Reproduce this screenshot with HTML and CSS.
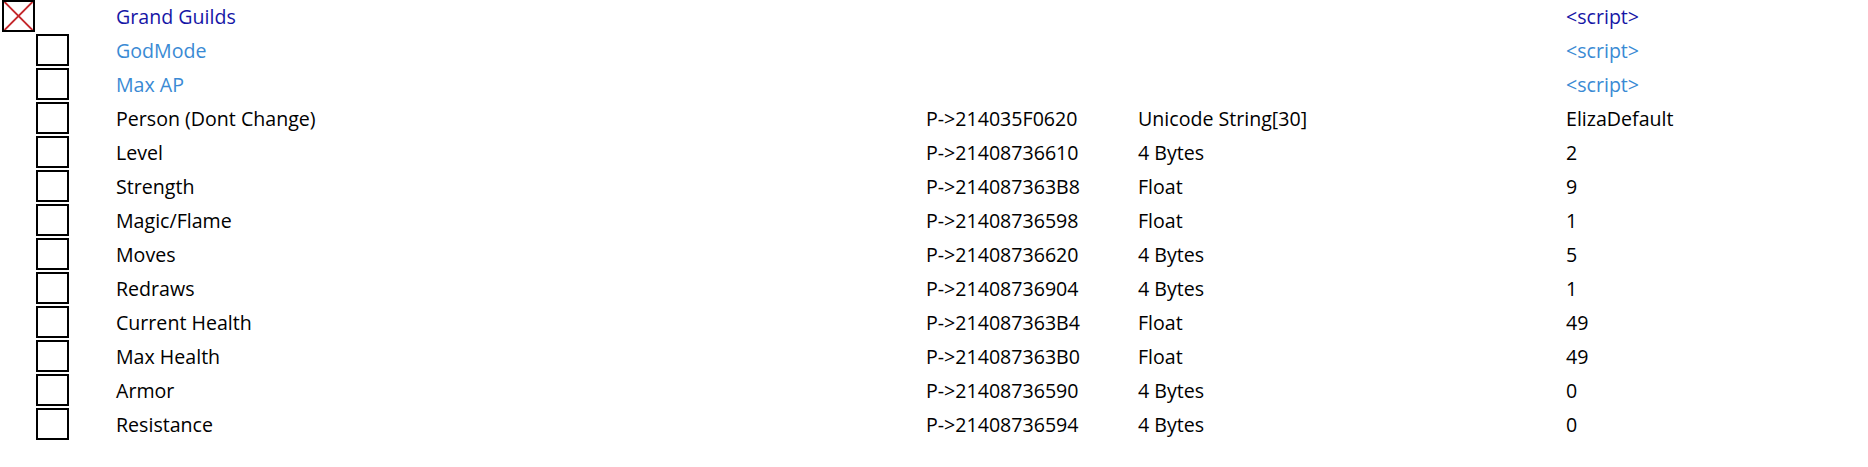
FILE: index.html
```html
<!DOCTYPE html>
<html>
<head>
<meta charset="utf-8">
<link rel="stylesheet" href="styles.css">
</head>
<body>
<div class="table">
  <div class="row">
    <div class="chk-cell"><span class="box"><svg class="x" viewBox="0 0 29 29"><line x1="0" y1="0" x2="29" y2="29"/><line x1="29" y1="0" x2="0" y2="29"/></svg></span></div>
    <div class="name group">Grand Guilds</div><div class="addr"></div><div class="type"></div><div class="val group">&lt;script&gt;</div>
  </div>
  <div class="row child">
    <div class="chk-cell"><span class="box"></span></div>
    <div class="name script">GodMode</div><div class="addr"></div><div class="type"></div><div class="val script">&lt;script&gt;</div>
  </div>
  <div class="row child">
    <div class="chk-cell"><span class="box"></span></div>
    <div class="name script">Max AP</div><div class="addr"></div><div class="type"></div><div class="val script">&lt;script&gt;</div>
  </div>
  <div class="row child">
    <div class="chk-cell"><span class="box"></span></div>
    <div class="name">Person (Dont Change)</div><div class="addr">P-&gt;214035F0620</div><div class="type">Unicode String[30]</div><div class="val">ElizaDefault</div>
  </div>
  <div class="row child">
    <div class="chk-cell"><span class="box"></span></div>
    <div class="name">Level</div><div class="addr">P-&gt;21408736610</div><div class="type">4 Bytes</div><div class="val">2</div>
  </div>
  <div class="row child">
    <div class="chk-cell"><span class="box"></span></div>
    <div class="name">Strength</div><div class="addr">P-&gt;214087363B8</div><div class="type">Float</div><div class="val">9</div>
  </div>
  <div class="row child">
    <div class="chk-cell"><span class="box"></span></div>
    <div class="name">Magic/Flame</div><div class="addr">P-&gt;21408736598</div><div class="type">Float</div><div class="val">1</div>
  </div>
  <div class="row child">
    <div class="chk-cell"><span class="box"></span></div>
    <div class="name">Moves</div><div class="addr">P-&gt;21408736620</div><div class="type">4 Bytes</div><div class="val">5</div>
  </div>
  <div class="row child">
    <div class="chk-cell"><span class="box"></span></div>
    <div class="name">Redraws</div><div class="addr">P-&gt;21408736904</div><div class="type">4 Bytes</div><div class="val">1</div>
  </div>
  <div class="row child">
    <div class="chk-cell"><span class="box"></span></div>
    <div class="name">Current Health</div><div class="addr">P-&gt;214087363B4</div><div class="type">Float</div><div class="val">49</div>
  </div>
  <div class="row child">
    <div class="chk-cell"><span class="box"></span></div>
    <div class="name">Max Health</div><div class="addr">P-&gt;214087363B0</div><div class="type">Float</div><div class="val">49</div>
  </div>
  <div class="row child">
    <div class="chk-cell"><span class="box"></span></div>
    <div class="name">Armor</div><div class="addr">P-&gt;21408736590</div><div class="type">4 Bytes</div><div class="val">0</div>
  </div>
  <div class="row child">
    <div class="chk-cell"><span class="box"></span></div>
    <div class="name">Resistance</div><div class="addr">P-&gt;21408736594</div><div class="type">4 Bytes</div><div class="val">0</div>
  </div>
</div>
</body>
</html>
```

FILE: styles.css
```css
html, body {
  margin: 0;
  padding: 0;
  background: #ffffff;
}
body {
  font-family: "Open Sans", "Noto Sans", "DejaVu Sans", sans-serif;
  font-size: 19.6px;
  color: #000000;
}
.table {
  display: flex;
  flex-direction: column;
}
.row {
  display: grid;
  grid-template-columns: 116px 810px 212px 428px 1fr;
  height: 34px;
}
.chk-cell {
  padding-left: 2px;
}
.row.child .chk-cell {
  padding-left: 36px;
}
.box {
  display: block;
  box-sizing: border-box;
  width: 33px;
  height: 32px;
  border: 2px solid #000000;
  position: relative;
}
.x {
  display: block;
  width: 29px;
  height: 28px;
}
.x line {
  stroke: #c4262a;
  stroke-width: 2;
}
.name, .addr, .type, .val {
  line-height: 34px;
  white-space: nowrap;
}
.group {
  color: #1616a6;
}
.script {
  color: #3a8ad4;
}
```
